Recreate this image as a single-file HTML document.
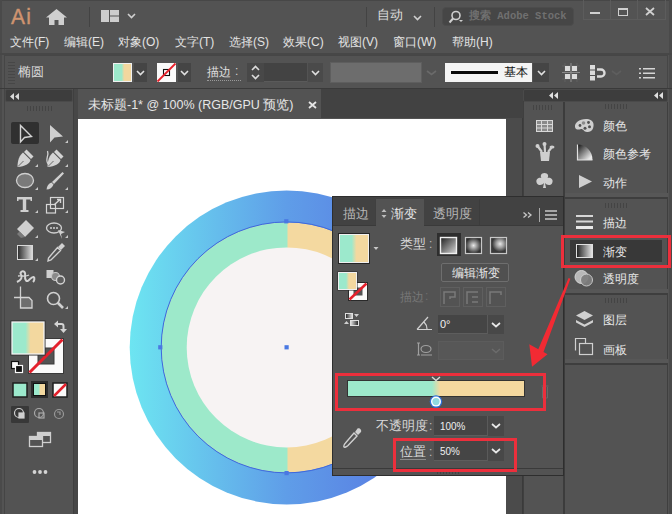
<!DOCTYPE html>
<html><head><meta charset="utf-8">
<style>
*{margin:0;padding:0;box-sizing:border-box}
html,body{width:672px;height:514px;overflow:hidden;background:#535353}
body{position:relative;font-family:"Liberation Sans",sans-serif;color:#e0e0e0;font-size:12px}
.a{position:absolute}
.t{position:absolute;white-space:nowrap;line-height:1}
svg{position:absolute;overflow:visible}
</style></head><body>
<!-- title bar -->
<div class="a" style="left:0;top:0;width:672px;height:33px;background:#535353"></div>
<div class="a" style="left:0;top:0;width:672px;height:1px;background:#474747"></div>
<div class="a" style="left:0;top:0;width:2px;height:514px;background:#4a4a4a"></div>
<div class="a" style="left:669px;top:0;width:3px;height:514px;background:#4a4a4a"></div>
<div class="t" style="left:11px;top:6px;font-size:22px;color:#cf9470;letter-spacing:1.5px;transform:scaleX(0.95);transform-origin:0 0;-webkit-text-stroke:0.4px #cf9470">Ai</div>
<svg style="left:46px;top:9px" width="21" height="16" viewBox="0 0 21 16"><path d="M10.5 0 L21 8.5 L18 8.5 L18 16 L12.5 16 L12.5 11 L8.5 11 L8.5 16 L3 16 L3 8.5 L0 8.5 Z" fill="#cfcfcf"/></svg>
<div class="a" style="left:89px;top:7px;width:1px;height:20px;background:#434343"></div>
<svg style="left:101px;top:10px" width="18" height="12"><rect x="0" y="0" width="8" height="12" fill="#cdcdcd"/><rect x="9" y="0" width="9" height="5.5" fill="#cdcdcd"/><rect x="9" y="6.5" width="9" height="5.5" fill="#cdcdcd"/></svg>
<svg style="left:127px;top:13px" width="9" height="6"><path d="M1 1 L4.5 4.5 L8 1" stroke="#d0d0d0" stroke-width="1.6" fill="none"/></svg>
<div class="a" style="left:366px;top:7px;width:1px;height:20px;background:#434343"></div>
<div class="t" style="left:377px;top:9px;font-size:12.5px;color:#dcdcdc">自动</div>
<svg style="left:413px;top:15px" width="9" height="6"><path d="M1 1 L4.5 4.5 L8 1" stroke="#d0d0d0" stroke-width="1.6" fill="none"/></svg>
<div class="a" style="left:434px;top:7px;width:1px;height:20px;background:#434343"></div>
<div class="a" style="left:442px;top:7px;width:132px;height:19px;background:#464646;border:1px solid #4c4c4c;border-radius:4px"></div>
<svg style="left:448px;top:10px" width="16" height="14"><circle cx="8" cy="5.5" r="4" stroke="#cfcfcf" stroke-width="1.6" fill="none"/><path d="M5 8.5 L1.5 12.5" stroke="#cfcfcf" stroke-width="2"/><path d="M11 10 L13 12 L15 10" fill="#cfcfcf"/></svg>
<div class="t" style="left:469px;top:11px;font-size:10.5px;color:#707070;font-family:'Liberation Mono',monospace;font-weight:bold">搜索 Adobe Stock</div>
<div class="a" style="left:583px;top:0;width:83px;height:20px;border:1px solid #5c5c5c;border-top:none"></div>
<div class="a" style="left:610px;top:0;width:1px;height:20px;background:#5c5c5c"></div>
<div class="a" style="left:637px;top:0;width:1px;height:20px;background:#5c5c5c"></div>
<div class="a" style="left:590px;top:12px;width:10px;height:2px;background:#cfcfcf"></div>
<div class="a" style="left:618px;top:8px;width:10px;height:8px;border:1.5px solid #cfcfcf;border-top-width:2px"></div>
<svg style="left:645px;top:7px" width="10" height="9"><path d="M1 1 L9 8 M9 1 L1 8" stroke="#cfcfcf" stroke-width="1.8"/></svg>
<div class="t" style="left:10px;top:36px;font-size:12px;color:#e3e3e3">文件(F)</div>
<div class="t" style="left:64px;top:36px;font-size:12px;color:#e3e3e3">编辑(E)</div>
<div class="t" style="left:118px;top:36px;font-size:12px;color:#e3e3e3">对象(O)</div>
<div class="t" style="left:175px;top:36px;font-size:12px;color:#e3e3e3">文字(T)</div>
<div class="t" style="left:229px;top:36px;font-size:12px;color:#e3e3e3">选择(S)</div>
<div class="t" style="left:283px;top:36px;font-size:12px;color:#e3e3e3">效果(C)</div>
<div class="t" style="left:338px;top:36px;font-size:12px;color:#e3e3e3">视图(V)</div>
<div class="t" style="left:393px;top:36px;font-size:12px;color:#e3e3e3">窗口(W)</div>
<div class="t" style="left:452px;top:36px;font-size:12px;color:#e3e3e3">帮助(H)</div>
<!-- menu -->
<div class="a" style="left:0;top:53px;width:672px;height:2px;background:#474747"></div>
<!-- control bar -->
<div class="a" style="left:4px;top:55px;width:664px;height:34px;background:#535353;border:1px solid #464646"></div>
<div class="a" style="left:0;top:88px;width:672px;height:1px;background:#3a3a3a"></div>
<svg style="left:8px;top:62px" width="8" height="22"><g fill="#474747"><rect x="0" y="0" width="7" height="1"/><rect x="0" y="3" width="7" height="1"/><rect x="0" y="6" width="7" height="1"/><rect x="0" y="9" width="7" height="1"/><rect x="0" y="12" width="7" height="1"/><rect x="0" y="15" width="7" height="1"/><rect x="0" y="18" width="7" height="1"/><rect x="0" y="21" width="7" height="1"/></g></svg>
<div class="t" style="left:18px;top:65px;font-size:13px;color:#d8d8d8">椭圆</div>
<div class="a" style="left:113px;top:63px;width:19px;height:19px;background:linear-gradient(90deg,#9de9cb 0%,#9de9cb 45%,#f2d79f 60%,#f2d79f 100%);border:1px solid #f0f0f0"></div>
<div class="a" style="left:134px;top:63px;width:13px;height:19px;background:#454545"></div>
<svg style="left:136px;top:70px" width="9" height="6"><path d="M1 1 L4.5 4.5 L8 1" stroke="#e0e0e0" stroke-width="1.6" fill="none"/></svg>
<div class="a" style="left:157px;top:63px;width:19px;height:19px;background:#fafafa"></div>
<svg style="left:157px;top:63px" width="19" height="19"><rect x="6.5" y="6.5" width="6" height="6" fill="none" stroke="#111" stroke-width="1.1"/><path d="M0.5 18.5 L18.5 0.5" stroke="#e8202a" stroke-width="1.8"/></svg>
<div class="a" style="left:178px;top:63px;width:13px;height:19px;background:#454545"></div>
<svg style="left:180px;top:70px" width="9" height="6"><path d="M1 1 L4.5 4.5 L8 1" stroke="#e0e0e0" stroke-width="1.6" fill="none"/></svg>
<div class="t" style="left:207px;top:66px;font-size:12px;color:#e0e0e0">描边</div>
<div class="t" style="left:235px;top:65px;font-size:12px;color:#cfcfcf">:</div>
<div class="a" style="left:207px;top:80px;width:34px;height:1px;border-top:1px dotted #9a9a9a"></div>
<div class="a" style="left:247px;top:63px;width:17px;height:19px;background:#484848"></div>
<svg style="left:250px;top:64px" width="11" height="17"><path d="M2 6 L5.5 2.5 L9 6 M2 11 L5.5 14.5 L9 11" stroke="#dcdcdc" stroke-width="1.6" fill="none"/></svg>
<div class="a" style="left:264px;top:63px;width:43px;height:19px;background:#434343;border-bottom:1px solid #5a5a5a"></div>
<div class="a" style="left:308px;top:63px;width:15px;height:19px;background:#4a4a4a"></div>
<svg style="left:311px;top:70px" width="9" height="6"><path d="M1 1 L4.5 4.5 L8 1" stroke="#e0e0e0" stroke-width="1.6" fill="none"/></svg>
<div class="a" style="left:330px;top:62px;width:92px;height:21px;background:#6d6d6d;border:1px solid #5e5e5e"></div>
<svg style="left:426px;top:70px" width="11" height="6"><path d="M1 1 L5.5 4.5 L10 1" stroke="#6a6a6a" stroke-width="1.6" fill="none"/></svg>
<div class="a" style="left:445px;top:63px;width:87px;height:19px;background:#f4f4f4"></div>
<div class="a" style="left:451px;top:71px;width:47px;height:3px;background:#0a0a0a"></div>
<div class="t" style="left:504px;top:66px;font-size:12px;color:#111;font-family:'Liberation Serif',serif">基本</div>
<div class="a" style="left:533px;top:63px;width:16px;height:19px;background:#454545"></div>
<svg style="left:537px;top:70px" width="9" height="6"><path d="M1 1 L4.5 4.5 L8 1" stroke="#e0e0e0" stroke-width="1.6" fill="none"/></svg>
<svg style="left:562px;top:63px" width="18" height="19"><path d="M0 9.5 H18 M9 0 V19 M3 0 V19 M15 0 V19 M0 3 H18 M0 16 H18" stroke="#656565" stroke-width="0.8"/><path d="M0 9.5 H18 M9 0 V19" stroke="#8a8a8a" stroke-width="1"/><g fill="#dcdcdc"><rect x="3" y="3" width="5" height="5"/><rect x="10" y="3" width="5" height="5"/><rect x="3" y="11" width="5" height="5"/><rect x="10" y="11" width="5" height="5"/></g></svg>
<svg style="left:589px;top:64px" width="18" height="17"><g fill="#dcdcdc"><rect x="1" y="1" width="5" height="4.5"/><rect x="1" y="6.5" width="5" height="4.5"/><rect x="1" y="12" width="5" height="4.5"/></g><path d="M8 5.5 H12 A3.5 3.5 0 0 1 12 12.5 H8" stroke="#dcdcdc" stroke-width="2.4" fill="none"/></svg>
<svg style="left:611px;top:70px" width="11" height="6"><path d="M1 1 L5.5 4.5 L10 1" stroke="#5e5e5e" stroke-width="1.6" fill="none"/></svg>
<svg style="left:639px;top:68px" width="16" height="11"><g fill="#d6d6d6"><rect x="0" y="0" width="2" height="1.5"/><rect x="0" y="4.5" width="2" height="1.5"/><rect x="0" y="9" width="2" height="1.5"/><rect x="4" y="0" width="12" height="1.5"/><rect x="4" y="4.5" width="12" height="1.5"/><rect x="4" y="9" width="12" height="1.5"/></g></svg>
<!-- left toolbar -->
<div class="a" style="left:4px;top:89px;width:70px;height:425px;background:#535353;border-left:1px solid #454545;border-right:1px solid #3f3f3f"></div>
<div class="a" style="left:5px;top:89px;width:68px;height:13px;background:#3d3d3d;border:1px solid #4a4a4a;border-radius:2px"></div>
<div class="a" style="left:74px;top:89px;width:4px;height:425px;background:#474747"></div>
<svg style="left:10px;top:93px" width="9" height="7"><path d="M4 0 L0 3.5 L4 7 Z M9 0 L5 3.5 L9 7 Z" fill="#d8d8d8"/></svg>
<svg style="left:27px;top:106px" width="26" height="5"><g fill="#444444"><rect x="0" y="0" width="1" height="5"/><rect x="3" y="0" width="1" height="5"/><rect x="6" y="0" width="1" height="5"/><rect x="9" y="0" width="1" height="5"/><rect x="12" y="0" width="1" height="5"/><rect x="15" y="0" width="1" height="5"/><rect x="18" y="0" width="1" height="5"/><rect x="21" y="0" width="1" height="5"/><rect x="24" y="0" width="1" height="5"/></g></svg>
<div class="a" style="left:11px;top:122px;width:28px;height:22px;background:#303030;border-radius:2px"></div>
<svg style="left:0;top:0" width="80" height="514">
<g fill="none" stroke="#d4d4d4" stroke-width="1.4" stroke-linejoin="miter">
<path d="M20.5 125.5 L20.5 142 L24.5 137.5 L31.5 136.5 Z"/>
</g>
<path d="M50 125 L50 142.5 L54.5 137.5 L63 136.5 Z" fill="#cfcfcf"/>
<g fill="#c8c8c8">
<path d="M65 143 L68 140 L68 143 Z M35 167 L38 164 L38 167 Z M65 167 L68 164 L68 167 Z M35 190 L38 187 L38 190 Z M65 190 L68 187 L68 190 Z M35 213 L38 210 L38 213 Z M65 213 L68 210 L68 213 Z M35 238 L38 235 L38 238 Z M65 238 L68 235 L68 238 Z M35 261 L38 258 L38 261 Z M65 309 L68 306 L68 309 Z"/>
</g>
<!-- pen -->
<g fill="#d4d4d4"><path d="M26.5 149.5 L33.5 156.5 L31 159 L24 152 Z"/><path d="M23 152.5 L30.5 160 C29.5 164 25 166.5 17.5 167 C17.5 160 19.5 155.5 23 152.5 Z"/></g>
<path d="M18 166.5 L23.5 161" stroke="#6a6a6a" stroke-width="1"/>
<g fill="#d4d4d4"><path d="M56.5 149.5 L63.5 156.5 L61 159 L54 152 Z"/><path d="M53 152.5 L60.5 160 C59.5 164 55 166.5 47.5 167 C47.5 160 49.5 155.5 53 152.5 Z"/></g>
<path d="M48 166.5 L53.5 161" stroke="#6a6a6a" stroke-width="1"/>
<path d="M48.5 164 C44 160, 49.5 156, 47.5 151" stroke="#d2d2d2" stroke-width="1.3" fill="none"/>
<!-- ellipse -->
<ellipse cx="25" cy="180.5" rx="8.5" ry="7" fill="#7a7a7a" stroke="#cfcfcf" stroke-width="1.3"/>
<!-- brush -->
<path d="M62.5 172 L64 173.5 L54 184 L52 182 Z" fill="#d0d0d0"/><path d="M51.5 182.5 L53.5 184.5 C52 188, 50 189.5, 46.5 189.5 C47 186, 48.5 183.5, 51.5 182.5 Z" fill="#d0d0d0"/>
<!-- T -->
<path d="M17 197 H32 V201 H30.5 V199.5 H26.2 V210 H28.5 V212 H20.5 V210 H22.8 V199.5 H18.5 V201 H17 Z" fill="#d0d0d0"/>
<!-- free transform -->
<g fill="none" stroke="#d6d6d6" stroke-width="1.2"><rect x="50.5" y="197.5" width="13" height="11"/><rect x="46.5" y="204.5" width="9" height="8.5"/></g>
<path d="M54 205 L60 199.5 M57 199.5 H60.5 V203" stroke="#d6d6d6" stroke-width="1.4" fill="none"/>
<!-- eraser -->
<path d="M26 220 L34 228 L25 237 L17 229 Z" fill="#d0d0d0"/><path d="M19.5 231.5 L25 237 L21 238 L17 234 Z" fill="#7a7a7a"/>
<!-- puppet/bubble -->
<ellipse cx="54" cy="228" rx="7.5" ry="5" fill="none" stroke="#d0d0d0" stroke-width="1.3"/>
<g fill="#d0d0d0"><circle cx="51" cy="228" r="1"/><circle cx="54" cy="228" r="1"/><circle cx="57" cy="228" r="1"/></g>
<path d="M58 230 L65 232 L61 234 L62 239 Z" fill="#d0d0d0"/>
<!-- gradient tool -->
<defs><linearGradient id="tg" x1="0" x2="1"><stop offset="0" stop-color="#2a2a2a"/><stop offset="1" stop-color="#e0e0e0"/></linearGradient></defs>
<rect x="17.5" y="245.5" width="15" height="14" fill="url(#tg)" stroke="#d8d8d8" stroke-width="1"/>
<!-- eyedropper -->
<path d="M62 243 L65 246 L61 250 L58 247 Z" fill="#d0d0d0"/><path d="M57.5 247.5 L60.5 250.5 L51 260 L48 261 L48.5 258 Z" fill="none" stroke="#d0d0d0" stroke-width="1.4"/>
<!-- blend -->
<path d="M17 282 C21 280 23 277 21 274.5 C19.5 272.5 22.5 270 24.5 272 C26.5 274 23.5 278 26 280.5 C28.5 283 30.5 276.5 33.5 277 C35 277.5 34.5 280.5 33 282" fill="none" stroke="#d4d4d4" stroke-width="2"/>
<path d="M18 276 C22 275.5 26 277 29 275" fill="none" stroke="#d4d4d4" stroke-width="1.3"/>
<!-- shape builder / symbol -->
<rect x="46.5" y="270" width="7" height="8" fill="#d0d0d0"/>
<circle cx="55.5" cy="276.5" r="4" fill="#8a8a8a" stroke="#c8c8c8" stroke-width="1.1"/>
<circle cx="60.5" cy="280" r="4" fill="#5e5e5e" stroke="#d4d4d4" stroke-width="1.4"/>
<!-- artboard -->
<path d="M20.5 286.5 V297.5 M14 297.5 H20.5" fill="none" stroke="#d0d0d0" stroke-width="1.3"/>
<path d="M20.5 297.5 H29 L32 300.5 V308 H20.5 Z" fill="#6e6e6e" stroke="#d4d4d4" stroke-width="1.3"/>
<!-- zoom -->
<circle cx="53.5" cy="298.5" r="6" fill="none" stroke="#d0d0d0" stroke-width="1.6"/>
<path d="M57.5 302.5 L63 308" stroke="#d0d0d0" stroke-width="2.6"/>
<!-- swatches -->
<defs><linearGradient id="fg" x1="0" x2="1"><stop offset="0" stop-color="#9ce9cc"/><stop offset="0.42" stop-color="#9ce9cc"/><stop offset="0.58" stop-color="#f3d89f"/><stop offset="1" stop-color="#f3d89f"/></linearGradient></defs>
<rect x="28.5" y="338.5" width="35" height="35" fill="#fafafa" stroke="#3a3a3a" stroke-width="1"/>
<rect x="38" y="348" width="16" height="16" fill="#535353" stroke="#3a3a3a" stroke-width="1"/>
<path d="M29.5 372.5 L62.5 339.5" stroke="#e4202c" stroke-width="3"/>
<rect x="10.5" y="320.5" width="35" height="35" fill="#2e2e2e"/>
<rect x="12" y="322" width="32" height="32" fill="url(#fg)" stroke="#f4f4f4" stroke-width="1.3"/>
<path d="M54 324 L58 320.5 L58 327.5 Z M60 329 L67 329 L63.5 333 Z" fill="#d4d4d4"/>
<path d="M57.5 324 H61.5 Q63.5 324 63.5 326 V329.5" fill="none" stroke="#d4d4d4" stroke-width="2"/>
<rect x="11.5" y="361.5" width="7" height="7" fill="#fafafa" stroke="#111" stroke-width="1.2"/>
<rect x="15.5" y="365.5" width="7" height="7" fill="#111" stroke="#fafafa" stroke-width="1.2"/>
<!-- color modes -->
<rect x="13" y="383" width="14" height="14" fill="#9ce9cc" stroke="#1e1e1e" stroke-width="1.5"/>
<rect x="31" y="381" width="17" height="17" fill="#2c2c2c"/>
<rect x="33.5" y="383.5" width="12" height="12" fill="url(#fg)" stroke="#111" stroke-width="1"/>
<rect x="53" y="383" width="14" height="14" fill="#fafafa" stroke="#1e1e1e" stroke-width="1.5"/>
<path d="M54 396 L66 384" stroke="#e4202c" stroke-width="2.5"/>
<!-- draw modes -->
<rect x="11" y="406" width="18" height="17" fill="#383838" rx="1"/>
<g fill="none" stroke="#d0d0d0" stroke-width="1.2"><circle cx="19" cy="413" r="4.5"/><rect x="19" y="413" width="5" height="5" fill="#d0d0d0"/>
<circle cx="39" cy="413" r="4.5" stroke="#a8a8a8"/><rect x="39" y="413" width="5" height="5" stroke="#a8a8a8"/>
<circle cx="59" cy="414" r="4.5" stroke="#999"/><path d="M57 412 H60 V415" stroke="#999"/></g>
<!-- screen mode -->
<g fill="none" stroke="#cfcfcf" stroke-width="1.3"><rect x="37.5" y="432.5" width="13" height="10"/><rect x="29.5" y="436.5" width="13" height="10" fill="#535353"/></g>
<rect x="38" y="433" width="12" height="3" fill="#cfcfcf"/><rect x="30" y="437" width="12" height="3" fill="#cfcfcf"/>
<g fill="#d4d4d4"><circle cx="34.5" cy="472" r="1.9"/><circle cx="40" cy="472" r="1.9"/><circle cx="45.5" cy="472" r="1.9"/></g>
</svg>
<!-- doc tab bar -->
<div class="a" style="left:78px;top:89px;width:445px;height:29px;background:#424242"></div>
<div class="a" style="left:78px;top:89px;width:243px;height:29px;background:#535353"></div>
<!-- canvas -->
<div class="a" style="left:78px;top:119px;width:428px;height:395px;background:#ffffff"></div>
<div class="a" style="left:506px;top:118px;width:18px;height:396px;background:#4b4b4b;border-right:2px solid #3a3a3a"></div>
<div class="t" style="left:88px;top:99px;font-size:12.5px;color:#e6e6e6">未标题-1* @ 100% (RGB/GPU 预览)</div>
<svg style="left:308px;top:101px" width="9" height="8"><path d="M1 1 L8 7 M8 1 L1 7" stroke="#e6e6e6" stroke-width="1.8"/></svg>
<!-- icon dock -->
<div class="a" style="left:523px;top:89px;width:41px;height:425px;background:#535353;border-left:1px solid #3f3f3f;border-right:1px solid #3f3f3f"></div>
<div class="a" style="left:523px;top:89px;width:145px;height:13px;background:#3d3d3d;border:1px solid #4a4a4a;border-radius:2px"></div>
<!-- label dock -->
<div class="a" style="left:563px;top:102px;width:105px;height:412px;background:#535353;border-left:2px solid #3c3c3c;border-right:1px solid #3f3f3f"></div>
<svg style="left:549px;top:92px" width="9" height="7"><path d="M4 0 L0 3.5 L4 7 Z M9 0 L5 3.5 L9 7 Z" fill="#e0e0e0"/></svg>
<svg style="left:654px;top:92px" width="9" height="7"><path d="M4 0 L0 3.5 L4 7 Z M9 0 L5 3.5 L9 7 Z" fill="#e0e0e0"/></svg>
<svg style="left:533px;top:105px" width="20" height="5"><g fill="#444444"><rect x="0" y="0" width="1" height="5"/><rect x="3" y="0" width="1" height="5"/><rect x="6" y="0" width="1" height="5"/><rect x="9" y="0" width="1" height="5"/><rect x="12" y="0" width="1" height="5"/><rect x="15" y="0" width="1" height="5"/><rect x="18" y="0" width="1" height="5"/></g></svg>
<svg style="left:605px;top:104px" width="22" height="5"><g fill="#444444"><rect x="0" y="0" width="1" height="5"/><rect x="3" y="0" width="1" height="5"/><rect x="6" y="0" width="1" height="5"/><rect x="9" y="0" width="1" height="5"/><rect x="12" y="0" width="1" height="5"/><rect x="15" y="0" width="1" height="5"/><rect x="18" y="0" width="1" height="5"/><rect x="21" y="0" width="1" height="5"/></g></svg>
<svg style="left:605px;top:203px" width="22" height="5"><g fill="#444444"><rect x="0" y="0" width="1" height="5"/><rect x="3" y="0" width="1" height="5"/><rect x="6" y="0" width="1" height="5"/><rect x="9" y="0" width="1" height="5"/><rect x="12" y="0" width="1" height="5"/><rect x="15" y="0" width="1" height="5"/><rect x="18" y="0" width="1" height="5"/><rect x="21" y="0" width="1" height="5"/></g></svg>
<svg style="left:605px;top:298px" width="22" height="5"><g fill="#444444"><rect x="0" y="0" width="1" height="5"/><rect x="3" y="0" width="1" height="5"/><rect x="6" y="0" width="1" height="5"/><rect x="9" y="0" width="1" height="5"/><rect x="12" y="0" width="1" height="5"/><rect x="15" y="0" width="1" height="5"/><rect x="18" y="0" width="1" height="5"/><rect x="21" y="0" width="1" height="5"/></g></svg>
<div class="a" style="left:565px;top:193px;width:103px;height:4px;background:#575757"></div><div class="a" style="left:565px;top:197px;width:103px;height:2px;background:#3e3e3e"></div>
<div class="a" style="left:565px;top:289px;width:103px;height:4px;background:#575757"></div><div class="a" style="left:565px;top:293px;width:103px;height:2px;background:#3e3e3e"></div>
<div class="a" style="left:565px;top:359px;width:103px;height:4px;background:#575757"></div><div class="a" style="left:565px;top:363px;width:103px;height:2px;background:#3e3e3e"></div>
<div class="a" style="left:524px;top:268px;width:40px;height:2px;background:#404040"></div>
<div class="t" style="left:603px;top:120px;font-size:12px;color:#e6e6e6">颜色</div>
<div class="t" style="left:603px;top:148px;font-size:12px;color:#e6e6e6">颜色参考</div>
<div class="t" style="left:603px;top:177px;font-size:12px;color:#e6e6e6">动作</div>
<div class="t" style="left:603px;top:217px;font-size:12px;color:#e6e6e6">描边</div>
<div class="a" style="left:570px;top:240px;width:92px;height:22px;background:#383838"></div>
<div class="t" style="left:603px;top:246px;font-size:12px;color:#e6e6e6">渐变</div>
<div class="t" style="left:603px;top:273px;font-size:12px;color:#e6e6e6">透明度</div>
<div class="t" style="left:603px;top:314px;font-size:12px;color:#e6e6e6">图层</div>
<div class="t" style="left:603px;top:344px;font-size:12px;color:#e6e6e6">画板</div>
<svg style="left:0;top:0" width="672" height="514">
<defs><linearGradient id="ig" x1="0" x2="1"><stop offset="0" stop-color="#1e1e1e"/><stop offset="1" stop-color="#e8e8e8"/></linearGradient>
<linearGradient id="cg" x1="0" y1="0" x2="1" y2="1"><stop offset="0" stop-color="#111"/><stop offset="0.85" stop-color="#e8e8e8"/></linearGradient></defs>
<!-- icon column -->
<rect x="536.5" y="120.5" width="16" height="11" fill="#8a8a8a"/><g fill="none" stroke="#d8d8d8" stroke-width="1"><rect x="536.5" y="120.5" width="16" height="11"/><path d="M536.5 124.5 H552.5 M536.5 128 H552.5 M541.5 120.5 V131.5 M547.5 120.5 V131.5"/></g>
<path d="M540 152 H550 L549 161 H541 Z" fill="#cfcfcf"/>
<path d="M542 152 L537.5 146 M545 152 L544.5 143.5 M548 152 L552 147" stroke="#cfcfcf" stroke-width="2.2"/>
<circle cx="537.5" cy="146" r="2" fill="#cfcfcf"/><circle cx="544.5" cy="144" r="2" fill="#cfcfcf"/><ellipse cx="552" cy="147" rx="2.5" ry="1.6" fill="#cfcfcf"/>
<path d="M544.5 173 C541 173 540 176 541.5 178 C538 177 535 180 537 183.5 C539 186 542.5 185 544 183 L543 188 H546 L545 183 C546.5 185 550 186 552 183.5 C554 180 551 177 547.5 178 C549 176 548 173 544.5 173 Z" fill="#cfcfcf"/>
<path d="M551 297 L554 299.5 L551 302" fill="none" stroke="#6a6a6a" stroke-width="1.2"/>
<!-- label dock icons -->
<path d="M586 119 C579 119 574.5 123 575 127 C575.5 130 578.5 130 581 129 C583 128.5 583.5 131.5 587 132 C592 132.5 594 128 593.5 124 C593 120.5 590 119 586 119 Z" fill="#cfcfcf"/>
<g fill="#505050"><circle cx="580" cy="125.5" r="1.4"/><circle cx="585" cy="128.3" r="1.5"/><circle cx="589.5" cy="126.8" r="1.5"/><circle cx="588.5" cy="122.5" r="1.4"/></g><circle cx="583.5" cy="123" r="1.8" fill="#8a8a8a"/>
<path d="M577.5 144.5 V160 H592.5 C592.5 151 586 144.5 577.5 144.5 Z" fill="url(#cg)"/><path d="M577.5 144.5 V160 H592.5" fill="none" stroke="#e0e0e0" stroke-width="1.2"/>
<path d="M579 175 L592 181.5 L579 188 Z" fill="#cfcfcf"/>
<g fill="#d6d6d6"><rect x="576" y="215" width="17" height="2"/><rect x="576" y="220.5" width="17" height="2"/><rect x="576" y="226" width="17" height="3" fill="#e8e8e8"/></g>
<rect x="576.5" y="244.5" width="16" height="13" fill="url(#ig)" stroke="#e0e0e0" stroke-width="1"/>
<circle cx="581.5" cy="277" r="6.5" fill="#b8b8b8" stroke="#d4d4d4"/>
<circle cx="586.5" cy="280" r="6" fill="#7e7e7e" stroke="#d0d0d0" opacity="0.92"/>
<path d="M584.5 311 L593 315.5 L584.5 320 L576 315.5 Z" fill="#d0d0d0"/>
<path d="M576 320 L584.5 324.5 L593 320 V322.5 L584.5 327 L576 322.5 Z" fill="#d0d0d0"/>
<g fill="none" stroke="#d0d0d0" stroke-width="1.2"><path d="M575.5 350.5 V338.5 H585.5 V343.5"/><rect x="579.5" y="343.5" width="13" height="11" /></g>
</svg>
<!-- circle -->
<svg style="left:0;top:0" width="672" height="514">
<defs><linearGradient id="og" x1="0" x2="1" y1="0" y2="0"><stop offset="0" stop-color="#6de5f1"/><stop offset="0.5" stop-color="#5f9de8"/><stop offset="1" stop-color="#566fe0"/></linearGradient></defs>
<circle cx="286.7" cy="347.4" r="157" fill="url(#og)"/>
<clipPath id="lh"><rect x="0" y="0" width="287.5" height="514"/></clipPath>
<circle cx="286.7" cy="347.4" r="125" fill="#f4d9a0"/>
<circle cx="286.7" cy="347.4" r="125" fill="#9de9ca" clip-path="url(#lh)"/>
<circle cx="286.7" cy="347.4" r="100" fill="#f7f3f3"/>
<circle cx="286.7" cy="347.4" r="125.5" fill="none" stroke="#3f68dc" stroke-width="1"/>
<g fill="#4a78e2"><rect x="284.2" y="219.2" width="4.2" height="4.2"/><rect x="158.2" y="345.2" width="4.2" height="4.2"/><rect x="284.5" y="345.2" width="4.2" height="4.2"/><rect x="284.5" y="471" width="4.2" height="4.2"/></g>
</svg>
<!-- gradient panel -->
<div class="a" style="left:332px;top:196px;width:232px;height:280px;background:#535353;border:1px solid #2e2e2e"></div>
<div class="a" style="left:333px;top:197px;width:230px;height:29px;background:#424242"></div>
<div class="a" style="left:376px;top:199px;width:48px;height:27px;background:#535353"></div>
<div class="a" style="left:333px;top:225px;width:230px;height:1px;background:#3a3a3a"></div>
<div class="a" style="left:479px;top:199px;width:1px;height:26px;background:#3c3c3c"></div>
<div class="a" style="left:375px;top:199px;width:1px;height:26px;background:#404040"></div>
<div class="a" style="left:376px;top:225px;width:48px;height:1px;background:#535353"></div>
<div class="t" style="left:343px;top:208px;font-size:12.5px;color:#b8b8b8">描边</div>
<svg style="left:381px;top:207px" width="6" height="13"><path d="M0.5 5 L3 2 L5.5 5 Z M0.5 8 L3 11 L5.5 8 Z" fill="#bdbdbd"/></svg>
<div class="t" style="left:391px;top:208px;font-size:12.5px;color:#e8e8e8">渐变</div>
<div class="t" style="left:433px;top:208px;font-size:12.5px;color:#b8b8b8">透明度</div>
<svg style="left:522px;top:211px" width="11" height="8"><path d="M1.5 1.5 L4.5 4 L1.5 6.5 M6 1.5 L9 4 L6 6.5" stroke="#c8c8c8" stroke-width="1.3" fill="none"/></svg>
<div class="a" style="left:539px;top:208px;width:1px;height:14px;background:#a8a8a8"></div>
<svg style="left:545px;top:210px" width="12" height="10"><path d="M0 1 H12 M0 5 H12 M0 9 H12" stroke="#c8c8c8" stroke-width="1.3"/></svg>
<svg style="left:0;top:0" width="672" height="514">
<defs>
<linearGradient id="pg" x1="0" x2="1"><stop offset="0" stop-color="#9ce9cc"/><stop offset="0.42" stop-color="#9ce9cc"/><stop offset="0.58" stop-color="#f3d89f"/><stop offset="1" stop-color="#f3d89f"/></linearGradient>
<linearGradient id="lg" x1="0" x2="1" y1="0" y2="1"><stop offset="0" stop-color="#1e1e1e"/><stop offset="1" stop-color="#d8d8d8"/></linearGradient>
<radialGradient id="rg"><stop offset="0" stop-color="#e8e8e8"/><stop offset="1" stop-color="#303030"/></radialGradient>
<radialGradient id="frg" cx="0.6" cy="0.4"><stop offset="0" stop-color="#e8e8e8"/><stop offset="0.5" stop-color="#9a9a9a"/><stop offset="1" stop-color="#3a3a3a"/></radialGradient>
</defs>
<rect x="338" y="233" width="32" height="31" fill="#262626"/>
<rect x="339.5" y="234.5" width="29" height="28" fill="url(#pg)" stroke="#f0f0f0" stroke-width="1"/>
<path d="M373.5 247 L378.5 247 L376 250 Z" fill="#c8c8c8"/>
<rect x="348.5" y="282.5" width="19" height="18" fill="#fafafa" stroke="#2a2a2a" stroke-width="1"/>
<rect x="353.5" y="287.5" width="9" height="8" fill="#535353"/>
<path d="M349.5 299.5 L366.5 283.5" stroke="#e4202c" stroke-width="2.5"/>
<rect x="337.5" y="271.5" width="20" height="19" fill="#262626"/>
<rect x="338.5" y="272.5" width="18" height="17" fill="url(#pg)" stroke="#f0f0f0" stroke-width="1"/>
<rect x="345.5" y="313.5" width="7" height="5" fill="url(#ig)" stroke="#e0e0e0" stroke-width="1"/>
<path d="M354 314 L359 314 L356.5 317 Z M344 324 L349 324 L346.5 321 Z" fill="#d0d0d0"/>
<rect x="350.5" y="320.5" width="8" height="5" fill="url(#ig)" stroke="#e0e0e0" stroke-width="1" transform="scale(-1,1) translate(-709,0)"/>
</svg>
<div class="t" style="left:400px;top:238px;font-size:12.5px;color:#d8d8d8">类型</div>
<div class="t" style="left:429px;top:238px;font-size:12px;color:#bdbdbd">:</div>
<div class="a" style="left:437px;top:233px;width:24px;height:23px;background:#2e2e2e"></div>
<svg style="left:0;top:0" width="672" height="514">
<rect x="440.5" y="237.5" width="16" height="16" fill="url(#lg)" stroke="#f0f0f0" stroke-width="1.4"/>
<rect x="465.5" y="237.5" width="16" height="16" fill="url(#rg)" stroke="#c8c8c8" stroke-width="1.2"/>
<rect x="490.5" y="237.5" width="16" height="16" fill="url(#frg)" stroke="#c8c8c8" stroke-width="1.2"/>
</svg>
<div class="a" style="left:441px;top:263px;width:68px;height:19px;border:1px solid #6e6e6e;border-radius:2px;background:#505050"></div>
<div class="t" style="left:452px;top:267px;font-size:12px;color:#e8e8e8">编辑渐变</div>
<div class="t" style="left:400px;top:291px;font-size:12px;color:#787878">描边</div>
<div class="t" style="left:425px;top:290px;font-size:12px;color:#6e6e6e">:</div>
<div class="a" style="left:440px;top:287px;width:20px;height:20px;border:1px solid #5f5f5f;background:#535353"></div>
<div class="a" style="left:463px;top:287px;width:20px;height:20px;border:1px solid #5f5f5f;background:#535353"></div>
<div class="a" style="left:486px;top:287px;width:20px;height:20px;border:1px solid #5f5f5f;background:#535353"></div>
<svg style="left:0;top:0" width="672" height="514"><g fill="none" stroke="#7a7a7a" stroke-width="1.5">
<path d="M444 304 V292 H455 V297 H450 V299"/><path d="M467 304 V292 H478 M472 297 H478 M472 302 H478"/><path d="M490 304 V292 H501 V295"/></g>
<g fill="none" stroke="#d0d0d0" stroke-width="1.2"><path d="M417 329.5 H432 M417 329.5 L428 317 M424 322 C426 324 427 326 427 329"/></g>
<g fill="none" stroke="#a0a0a0" stroke-width="1.2"><ellipse cx="426" cy="349" rx="5" ry="3.5"/><path d="M417 343 H420 M418.5 343 V355 M417 355 H420 M421 355 H432"/></g>
</svg>
<div class="a" style="left:438px;top:315px;width:49px;height:19px;background:#454545;border-bottom:1px solid #5d5d5d"></div>
<div class="a" style="left:487px;top:315px;width:17px;height:19px;background:#484848;border-left:1px solid #5a5a5a"></div>
<div class="t" style="left:440px;top:319px;font-size:11px;color:#f0f0f0">0°</div>
<svg style="left:491px;top:322px" width="10" height="6"><path d="M1 1 L5 4.5 L9 1" stroke="#e8e8e8" stroke-width="1.7" fill="none"/></svg>
<div class="a" style="left:438px;top:341px;width:66px;height:19px;background:#575757;border:1px solid #5c5c5c"></div>
<svg style="left:491px;top:348px" width="10" height="6"><path d="M1 1 L5 4.5 L9 1" stroke="#6c6c6c" stroke-width="1.5" fill="none"/></svg>
<!-- gradient slider -->
<div class="a" style="left:347px;top:380px;width:178px;height:17px;background:#333333"></div>
<div class="a" style="left:348px;top:381px;width:176px;height:15px;background:linear-gradient(90deg,#9de9cb 0,#9de9cb 84px,#f4d89f 92px,#f4d89f 100%)"></div>
<svg style="left:431px;top:376px" width="10" height="6"><path d="M1 1 L5 4.5 L9 1" stroke="#d8d8d8" stroke-width="1.4" fill="none"/></svg>
<svg style="left:428px;top:394px" width="16" height="16"><circle cx="8" cy="7.6" r="6.3" fill="#2d6fd8"/><circle cx="8" cy="7.6" r="5" fill="#ffffff"/><circle cx="8" cy="7.6" r="3.6" fill="#8fd9e0"/></svg>
<svg style="left:540px;top:385px" width="10" height="14"><path d="M1.5 1 H8.5 M2.5 2 V13 H7.5 V2 M5 3 V12" stroke="#6a6a6a" stroke-width="1" fill="none"/></svg>
<div class="t" style="left:376px;top:420px;font-size:12.5px;color:#d8d8d8">不透明度</div>
<div class="t" style="left:429px;top:420px;font-size:12px;color:#bdbdbd">:</div>
<div class="a" style="left:434px;top:416px;width:53px;height:20px;background:#454545;border-bottom:1px solid #5d5d5d"></div>
<div class="a" style="left:487px;top:416px;width:17px;height:20px;background:#484848;border-left:1px solid #5a5a5a"></div>
<div class="t" style="left:440px;top:421px;font-size:11px;color:#f0f0f0;transform:scaleX(0.9);transform-origin:0 0">100%</div>
<svg style="left:491px;top:423px" width="10" height="6"><path d="M1 1 L5 4.5 L9 1" stroke="#e8e8e8" stroke-width="1.7" fill="none"/></svg>
<svg style="left:343px;top:427px" width="20" height="22"><path d="M14.5 1.5 C16.5 0.5 19 3 18 5 L15 8 L12 5 Z" fill="#d0d0d0"/><path d="M11 6 L14 9 L5 18.5 C3.5 20 1.5 20.5 1 20 C0.5 19.5 1 17.5 2.5 16 Z" fill="none" stroke="#d0d0d0" stroke-width="1.4"/></svg>
<div class="t" style="left:400px;top:446px;font-size:12.5px;color:#d8d8d8">位置</div>
<div class="a" style="left:400px;top:459px;width:26px;height:1px;background:#8a8a8a"></div>
<div class="t" style="left:429px;top:446px;font-size:12px;color:#bdbdbd">:</div>
<div class="a" style="left:434px;top:441px;width:53px;height:20px;background:#454545;border-bottom:1px solid #5d5d5d"></div>
<div class="a" style="left:487px;top:441px;width:17px;height:20px;background:#484848;border-left:1px solid #5a5a5a"></div>
<div class="t" style="left:440px;top:446px;font-size:11px;color:#f0f0f0;transform:scaleX(0.9);transform-origin:0 0">50%</div>
<svg style="left:491px;top:448px" width="10" height="6"><path d="M1 1 L5 4.5 L9 1" stroke="#e8e8e8" stroke-width="1.7" fill="none"/></svg>
<div class="a" style="left:333px;top:468px;width:230px;height:1px;background:#3a3a3a"></div>
<svg style="left:437px;top:471px" width="22" height="3"><g fill="#444444"><rect x="0" y="0" width="1" height="3"/><rect x="3" y="0" width="1" height="3"/><rect x="6" y="0" width="1" height="3"/><rect x="9" y="0" width="1" height="3"/><rect x="12" y="0" width="1" height="3"/><rect x="15" y="0" width="1" height="3"/><rect x="18" y="0" width="1" height="3"/><rect x="21" y="0" width="1" height="3"/></g></svg>
<!-- red annotations -->
<div class="a" style="left:335px;top:373px;width:211px;height:38px;border:3px solid #ec2f3c"></div>
<div class="a" style="left:393px;top:438px;width:124px;height:34px;border:3px solid #ec2f3c"></div>
<div class="a" style="left:561px;top:235px;width:110px;height:33px;border:3px solid #ec2f3c"></div>
<svg style="left:0;top:0" width="672" height="514"><path d="M568.6 278 L570.4 278.8 L543.5 352 L547.5 354.3 L532 366.8 L529.3 344.3 L538.3 349.3 Z" fill="#f22a33"/></svg>
</body></html>
